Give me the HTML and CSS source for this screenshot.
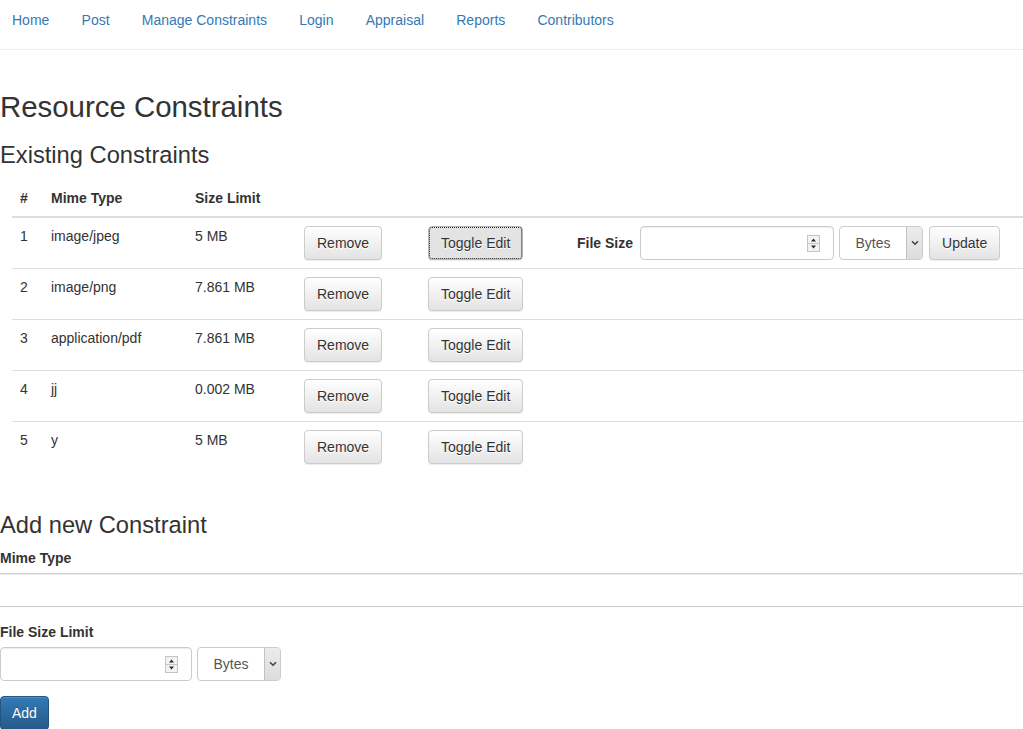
FILE: index.html
```html
<!DOCTYPE html>
<html lang="en">
<head>
<meta charset="utf-8">
<title>Resource Constraints</title>
<link rel="stylesheet" href="styles.css">
</head>
<body>
<nav class="navbar">
  <ul class="nav">
    <li><a href="#">Home</a></li>
    <li><a href="#">Post</a></li>
    <li><a href="#">Manage Constraints</a></li>
    <li><a href="#">Login</a></li>
    <li><a href="#">Appraisal</a></li>
    <li><a href="#">Reports</a></li>
    <li><a href="#">Contributors</a></li>
  </ul>
</nav>
<main class="page">
  <h2 class="title">Resource Constraints</h2>
  <h3 class="section existing">Existing Constraints</h3>
  <table class="table">
    <colgroup>
      <col class="c-num"><col class="c-mime"><col class="c-size"><col class="c-remove"><col class="c-toggle"><col class="c-edit">
    </colgroup>
    <thead>
      <tr><th>#</th><th>Mime Type</th><th>Size Limit</th><th></th><th></th><th></th></tr>
    </thead>
    <tbody>
      <tr>
        <td>1</td><td>image/jpeg</td><td>5 MB</td>
        <td><button class="btn">Remove</button></td>
        <td><button class="btn btn-focus">Toggle Edit</button></td>
        <td>
          <div class="edit-form">
            <label class="edit-label">File Size</label>
            <div class="num-field wide">
              <input class="num-input" type="text" aria-label="File Size">
              <span class="spin"><svg width="13" height="17" viewBox="0 0 13 17"><rect x="0.5" y="0.5" width="12" height="16" fill="#f3f3f3" stroke="#c4c4c4"/><line x1="1" y1="8.5" x2="12" y2="8.5" stroke="#c4c4c4"/><path d="M4 6.5h5L6.5 3.5z" fill="#2b2b2b"/><path d="M4 10.5h5L6.5 13.5z" fill="#2b2b2b"/></svg></span>
            </div>
            <div class="select"><span class="select-text">Bytes</span><span class="select-arrow"><svg width="8" height="6" viewBox="0 0 8 6"><path d="M1 1.2l3 3 3-3" stroke="#444" stroke-width="1.6" fill="none"/></svg></span></div>
            <button class="btn">Update</button>
          </div>
        </td>
      </tr>
      <tr>
        <td>2</td><td>image/png</td><td>7.861 MB</td>
        <td><button class="btn">Remove</button></td>
        <td><button class="btn">Toggle Edit</button></td>
        <td></td>
      </tr>
      <tr>
        <td>3</td><td>application/pdf</td><td>7.861 MB</td>
        <td><button class="btn">Remove</button></td>
        <td><button class="btn">Toggle Edit</button></td>
        <td></td>
      </tr>
      <tr>
        <td>4</td><td>jj</td><td>0.002 MB</td>
        <td><button class="btn">Remove</button></td>
        <td><button class="btn">Toggle Edit</button></td>
        <td></td>
      </tr>
      <tr>
        <td>5</td><td>y</td><td>5 MB</td>
        <td><button class="btn">Remove</button></td>
        <td><button class="btn">Toggle Edit</button></td>
        <td></td>
      </tr>
    </tbody>
  </table>

  <h3 class="section add">Add new Constraint</h3>
  <form class="add-form">
    <div class="form-group">
      <label class="form-label">Mime Type</label>
      <input class="form-control full" type="text" aria-label="Mime Type">
    </div>
    <div class="form-group">
      <label class="form-label">File Size Limit</label>
      <div class="size-row">
        <div class="num-field narrow">
          <input class="num-input" type="text" aria-label="File Size Limit">
          <span class="spin"><svg width="13" height="17" viewBox="0 0 13 17"><rect x="0.5" y="0.5" width="12" height="16" fill="#f3f3f3" stroke="#c4c4c4"/><line x1="1" y1="8.5" x2="12" y2="8.5" stroke="#c4c4c4"/><path d="M4 6.5h5L6.5 3.5z" fill="#2b2b2b"/><path d="M4 10.5h5L6.5 13.5z" fill="#2b2b2b"/></svg></span>
        </div>
        <div class="select"><span class="select-text">Bytes</span><span class="select-arrow"><svg width="8" height="6" viewBox="0 0 8 6"><path d="M1 1.2l3 3 3-3" stroke="#444" stroke-width="1.6" fill="none"/></svg></span></div>
      </div>
    </div>
    <button class="btn btn-primary" type="button">Add</button>
  </form>
</main>
</body>
</html>
```

FILE: styles.css
```css
* { box-sizing: border-box; }

html, body {
  margin: 0;
  padding: 0;
}

body {
  font-family: "Liberation Sans", Arial, Helvetica, sans-serif;
  font-size: 14px;
  line-height: 20px;
  color: #333;
  background: #fff;
  overflow-x: hidden;
}

/* Navbar */
.navbar {
  height: 50px;
  border-bottom: 1px solid #eee;
}

.nav {
  list-style: none;
  margin: 0;
  padding: 10px 0 0 12px;
  display: flex;
  gap: 32.2px;
}

.nav a {
  color: #3479b5;
  text-decoration: none;
  line-height: 20px;
}

/* Headings */
.title {
  font-size: 29.4px;
  font-weight: 500;
  line-height: 33px;
  margin: 40px 0 0;
}

.section {
  font-size: 23.7px;
  font-weight: 500;
  line-height: 26px;
}

.existing {
  margin: 19px 0 12px;
}

.add {
  margin: 40px 0 10px;
}

/* Table */
.table {
  margin-left: 12px;
  width: calc(100% - 12px);
  table-layout: fixed;
  border-collapse: separate;
  border-spacing: 0;
}

.c-num { width: 31px; }
.c-mime { width: 144px; }
.c-size { width: 109px; }
.c-remove { width: 124px; }
.c-toggle { width: 149px; }

.table th {
  text-align: left;
  font-weight: bold;
  padding: 8px;
  line-height: 20px;
  border-bottom: 2px solid #ddd;
  vertical-align: bottom;
}

.table td {
  padding: 8px;
  line-height: 20px;
  vertical-align: top;
  border-top: 1px solid #ddd;
}

.table tbody tr:first-child td {
  border-top: 0;
}

/* Buttons */
.btn {
  font-family: inherit;
  font-size: 14px;
  line-height: 20px;
  height: 34px;
  padding: 6px 12px;
  color: #333;
  border: 1px solid #ccc;
  border-radius: 4px;
  background-color: #e8e8e8;
  background-image: linear-gradient(to bottom, #ffffff 0%, #e3e3e3 100%);
  box-shadow: inset 0 1px 0 rgba(255,255,255,.15), 0 1px 1px rgba(0,0,0,.075);
  text-shadow: 0 1px 0 #fff;
  cursor: pointer;
  white-space: nowrap;
}

.btn-focus {
  background-image: none;
  background-color: #e3e3e3;
  border-color: #b5b5b5;
  outline: 1px dotted #222;
  outline-offset: -2px;
}

.btn-primary {
  color: #fff;
  text-shadow: 0 -1px 0 rgba(0,0,0,.2);
  border-color: #245580;
  background-color: #2d6ca2;
  background-image: linear-gradient(to bottom, #337ab7 0%, #265a88 100%);
  padding: 6px 11px;
}

/* Inline edit form */
.edit-form {
  display: flex;
  align-items: center;
}

.edit-label {
  font-weight: bold;
  margin-right: 7px;
}

.num-field {
  display: flex;
  align-items: center;
  height: 34px;
  border: 1px solid #ccc;
  border-radius: 4px;
  background: #fff;
  box-shadow: inset 0 1px 1px rgba(0,0,0,.075);
  padding-right: 13px;
}

.num-field.wide { width: 194px; }
.num-field.narrow { width: 192px; }

.num-input {
  flex: 1;
  min-width: 0;
  border: 0;
  outline: 0;
  background: transparent;
  font: inherit;
  padding: 0 12px;
  height: 100%;
}

.spin {
  display: flex;
  width: 13px;
  height: 17px;
}

.select {
  display: flex;
  height: 34px;
  width: 84px;
  margin-left: 5px;
  border: 1px solid #ccc;
  border-radius: 4px;
  overflow: hidden;
  background: #fff;
  color: #555;
}

.select-text {
  flex: 1;
  text-align: center;
  line-height: 32px;
}

.select-arrow {
  width: 16px;
  display: flex;
  align-items: center;
  justify-content: center;
  background: linear-gradient(to bottom, #ececec, #dcdcdc);
  border-left: 1px solid #c2c2c2;
}

.edit-form .btn {
  margin-left: 6px;
}

/* Add form */
.add-form {
  margin: 0;
}

.form-group {
  margin-bottom: 15px;
}

.form-label {
  display: block;
  font-weight: bold;
  margin-bottom: 5px;
}

.form-control.full {
  display: block;
  width: 100%;
  height: 34px;
  border: 0;
  border-top: 1px solid #ccc;
  border-bottom: 1px solid #ccc;
  box-shadow: inset 0 1px 1px rgba(0,0,0,.075);
  font: inherit;
  padding: 6px 12px;
  outline: 0;
}

.size-row {
  display: flex;
}
```
